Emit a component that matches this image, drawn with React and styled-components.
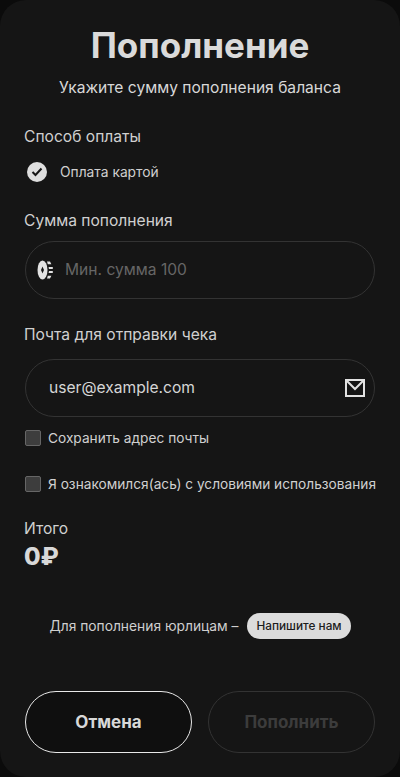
import React from "react";
import styled, { createGlobalStyle } from "styled-components";

const Global = createGlobalStyle`
  html, body { margin: 0; padding: 0; background: #0b0b0b; }
  body { font-family: Inter, "Noto Sans", sans-serif; }
  * { box-sizing: border-box; }
`;
const Panel = styled.div`
  width: 400px; height: 777px; background: #151515; border-radius: 26px;
  padding: 24px 25px 0 25px; display: flex; flex-direction: column; color: #dcdcdc;
  overflow: hidden;
`;
const Title = styled.h1`
  margin: 0; font-size: 35px; line-height: 42px; font-weight: 700; text-align: center; color: #dadada;
`;
const Subtitle = styled.p`
  margin: 12px 0 0; font-size: 15.6px; line-height: 20px; text-align: center; color: #d8d8d8; white-space: nowrap;
`;
const Label = styled.div`
  font-size: 15.6px; line-height: 20px; color: #d0d0d0; margin: ${p => p.$top}px 0 0 -1px;
`;
const RadioRow = styled.div`
  display: flex; align-items: center; gap: 13px; margin: 15px 0 0 2px; height: 20px;
  font-size: 13.8px; color: #cfcfcf;
`;
const RadioDot = styled.span`
  width: 20px; height: 20px; border-radius: 50%; background: #dedede; display: flex; align-items: center; justify-content: center;
`;
const Field = styled.div`
  height: 58px; border: 1px solid #333; border-radius: 29px; margin-top: ${p => p.$top}px;
  display: flex; align-items: center; padding: ${p => p.$pad}; font-size: 15.6px; color: ${p => p.$color};
`;
const FieldText = styled.span`
  flex: 1; margin: 0 0 2px ${p => p.$left}px;
`;
const CheckRow = styled.div`
  display: flex; align-items: center; gap: 7px; height: 20px; margin-top: ${p => p.$top}px;
  font-size: 13.7px; color: #d0d0d0; white-space: nowrap;
`;
const Box = styled.span`
  width: 16px; height: 16px; flex: none; background: #3d3d3d; border: 1px solid #666; border-radius: 2px;
`;
const Total = styled.div`
  font-size: 24px; line-height: 28px; font-weight: 800; color: #d8d8d8; margin: 4px 0 0 -1px;
`;
const LegalRow = styled.div`
  display: flex; align-items: center; justify-content: center; gap: 9px; margin-top: 42px;
  font-size: 13.8px; color: #cfcfcf; height: 26px;
`;
const Pill = styled.span`
  height: 26px; padding: 0 9px; border-radius: 13px; background: #dcdcdc; color: #1c1c1c;
  font-size: 11.8px; font-weight: 500; display: flex; align-items: center;
`;
const Actions = styled.div`
  display: grid; grid-template-columns: 167px 167px; gap: 16px; margin-top: 52px;
`;
const Button = styled.div`
  height: 62px; border-radius: 31px; display: flex; align-items: center; justify-content: center;
  font-size: 17px; font-weight: 700;
  background: ${p => p.$primary ? "#0f0f0f" : "transparent"};
  border: 1px solid ${p => p.$primary ? "#e8e8e8" : "#333"};
  color: ${p => p.$primary ? "#d8d8d8" : "#3c3c3c"};
`;

const Check = () => (
  <svg width="12" height="10" viewBox="0 0 12 10" fill="none" stroke="#151515" strokeWidth="2">
    <path d="M1.5 5l3 3 6-6.5" />
  </svg>
);
const Coin = () => (
  <svg width="16" height="20" viewBox="0 0 16 20">
    <ellipse cx="5.5" cy="10" rx="5" ry="9.5" fill="#e2e2e2" />
    <path d="M5.5 6.5 7 10 5.5 13.5 4 10z" fill="#151515" />
    <path d="M10 1.5h3l1.4 2.8h-3.6zM11.6 7h4.2v2h-3.9zM12 11h3.8v2h-4.2zM10.8 15.7h3.6L13 18.5h-3z" fill="#e2e2e2" />
  </svg>
);
const Mail = () => (
  <svg width="20" height="18" viewBox="0 0 20 18" fill="none" stroke="#e2e2e2" strokeWidth="2">
    <rect x="1" y="1" width="18" height="16" />
    <path d="M1.5 1.5 10 10l8.5-8.5" />
  </svg>
);

export default function App() {
  return (
    <>
      <Global />
      <Panel>
        <Title>Пополнение</Title>
        <Subtitle>Укажите сумму пополнения баланса</Subtitle>
        <Label $top={29}>Способ оплаты</Label>
        <RadioRow><RadioDot><Check /></RadioDot>Оплата картой</RadioRow>
        <Label $top={29}>Сумма пополнения</Label>
        <Field $top={10} $pad="0 16px 0 11px" $color="#666"><Coin /><FieldText $left={12}>Мин. сумма 100</FieldText></Field>
        <Label $top={26}>Почта для отправки чека</Label>
        <Field $top={14} $pad="0 9px 0 23px" $color="#d6d6d6"><FieldText $left={0}>user@example.com</FieldText><Mail /></Field>
        <CheckRow $top={11}><Box />Сохранить адрес почты</CheckRow>
        <CheckRow $top={26}><Box />Я ознакомился(ась) с условиями использования</CheckRow>
        <Label $top={25}>Итого</Label>
        <Total>0₽</Total>
        <LegalRow>Для пополнения юрлицам –<Pill>Напишите нам</Pill></LegalRow>
        <Actions><Button $primary>Отмена</Button><Button>Пополнить</Button></Actions>
      </Panel>
    </>
  );
}
